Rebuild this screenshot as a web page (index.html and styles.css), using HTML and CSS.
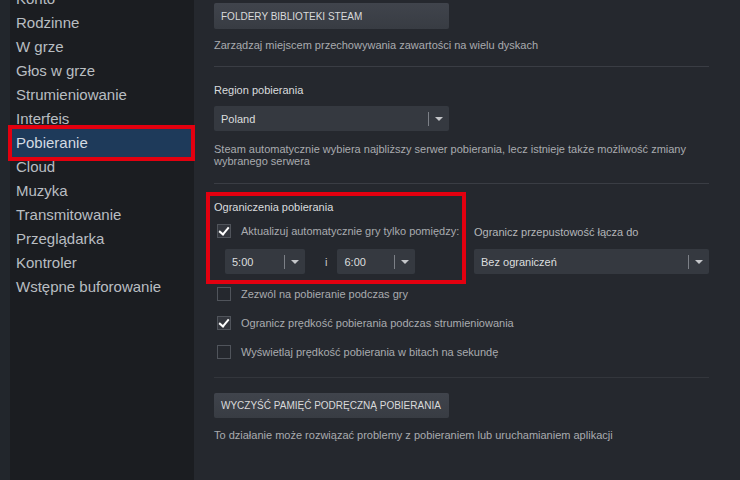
FILE: index.html
```html
<!DOCTYPE html>
<html lang="pl">
<head>
  <meta charset="UTF-8">
  <title>Ustawienia - Pobieranie</title>
  <link rel="stylesheet" href="styles.css">
</head>
<body>
  <div class="window">
    <!-- Sidebar -->
    <ul class="nav">
      <li>Konto</li>
      <li>Rodzinne</li>
      <li>W grze</li>
      <li>Głos w grze</li>
      <li>Strumieniowanie</li>
      <li>Interfeis</li>
      <li class="active">Pobieranie</li>
      <li>Cloud</li>
      <li>Muzyka</li>
      <li>Transmitowanie</li>
      <li>Przeglądarka</li>
      <li>Kontroler</li>
      <li>Wstępne buforowanie</li>
    </ul>

    <!-- Download settings -->
    <div class="content">
      <button class="btn">FOLDERY BIBLIOTEKI STEAM</button>
      <p class="desc first">Zarządzaj miejscem przechowywania zawartości na wielu dyskach</p>
      <div class="divider"></div>

      <div class="heading">Region pobierania</div>
      <div class="select region">
        <span>Poland</span>
        <span class="arrow"></span>
      </div>
      <p class="desc two-line">Steam automatycznie wybiera najbliższy serwer pobierania, lecz istnieje także możliwość zmiany wybranego serwera</p>
      <div class="divider"></div>

      <div class="limits">
        <div class="limits-box">
          <div class="heading">Ograniczenia pobierania</div>
          <label class="check-row">
            <span class="box checked"></span>
            Aktualizuj automatycznie gry tylko pomiędzy:
          </label>
          <div class="time-row">
            <div class="select time">
              <span>5:00</span>
              <span class="arrow"></span>
            </div>
            <span class="and">i</span>
            <div class="select time">
              <span>6:00</span>
              <span class="arrow"></span>
            </div>
          </div>
        </div>
        <div class="bandwidth">
          <div class="label">Ogranicz przepustowość łącza do</div>
          <div class="select wide">
            <span>Bez ograniczeń</span>
            <span class="arrow"></span>
          </div>
        </div>
      </div>

      <label class="check-row option">
        <span class="box"></span>
        Zezwól na pobieranie podczas gry
      </label>
      <label class="check-row option">
        <span class="box checked"></span>
        Ogranicz prędkość pobierania podczas strumieniowania
      </label>
      <label class="check-row option">
        <span class="box"></span>
        Wyświetlaj prędkość pobierania w bitach na sekundę
      </label>
      <div class="divider faint"></div>

      <button class="btn clear">WYCZYŚĆ PAMIĘĆ PODRĘCZNĄ POBIERANIA</button>
      <p class="desc">To działanie może rozwiązać problemy z pobieraniem lub uruchamianiem aplikacji</p>
    </div>
  </div>
</body>
</html>
```

FILE: styles.css
```css
/* General styling */
body {
  margin: 0;
  background-color: #25282e;
  font-family: "Liberation Sans", Arial, sans-serif;
  overflow: hidden;
}
.window {
  display: flex;
  height: 480px;
}

/* Sidebar */
.nav {
  list-style: none;
  margin: 0;
  padding: 0;
  width: 184px;
  border-left: 10px solid #22262c;
  background-color: #1b1d21;
}
.nav li {
  height: 24px;
  line-height: 24px;
  padding-left: 6px;
  font-size: 15px;
  color: #b9bdc1;
}
.nav li:first-child {
  margin-top: -13px;
}
.nav li.active {
  margin: 0 5px 0 4px;
  padding-left: 2px;
  background-color: #1e3a5a;
  box-shadow: 0 0 0 2px #1e3a5a;
  outline: 4px solid #e3000f;
  outline-offset: 2px;
  color: #d4dbe2;
}

/* Content */
.content {
  width: 495px;
  padding: 3px 0 0 20px;
  font-size: 11px;
  color: #a9abae;
}
.btn {
  display: block;
  width: 235px;
  height: 26px;
  padding: 0 7px;
  border: none;
  border-radius: 2px;
  background: linear-gradient(#40444c, #383c43);
  color: #d9dadb;
  font-family: inherit;
  font-size: 10px;
  text-align: left;
}
.btn.clear {
  height: 25px;
  margin-top: 15px;
}
.desc {
  margin: 10px 0 0;
  line-height: 14px;
}
.desc.first {
  margin-top: 9px;
}
.desc.two-line {
  margin-top: 12px;
  line-height: 12px;
}
.divider {
  height: 1px;
  margin-top: 14px;
  background-color: #3a3d44;
}
.desc.two-line + .divider {
  margin-top: 16px;
}
.divider.faint {
  margin-top: 18px;
  background-color: #33363c;
}
.heading {
  margin-top: 16px;
  line-height: 14px;
  color: #dadcde;
}

/* Dropdowns */
.select {
  display: flex;
  align-items: center;
  justify-content: space-between;
  box-sizing: border-box;
  height: 25px;
  padding-left: 7px;
  border-radius: 2px;
  background-color: #353940;
  color: #dcdedf;
}
.select.region {
  width: 235px;
  margin-top: 9px;
}
.select.time {
  width: 80px;
}
.select.wide {
  width: 235px;
  margin-top: 10px;
}
.arrow {
  position: relative;
  width: 20px;
  height: 14px;
  border-left: 1px solid #7c8087;
}
.arrow::after {
  content: "";
  position: absolute;
  left: 6px;
  top: 5px;
  border-left: 4px solid transparent;
  border-right: 4px solid transparent;
  border-top: 4px solid #c4c6c9;
}

/* Download limits */
.limits {
  display: flex;
  align-items: flex-end;
  gap: 12px;
  margin-top: 12px;
}
.limits-box {
  width: 248px;
  margin-left: -4px;
  padding: 4px 0 6px 4px;
  outline: 4px solid #e3000f;
}
.limits-box .heading {
  margin-top: 0;
}
.check-row {
  display: flex;
  align-items: center;
  gap: 10px;
  height: 14px;
  margin-top: 10px;
  padding-left: 3px;
}
.check-row.option {
  margin-top: 15px;
}
.check-row.option:first-of-type {
  margin-top: 7px;
}
.box {
  box-sizing: border-box;
  width: 14px;
  height: 14px;
  border: 1px solid #50545b;
  background-color: #25282e;
}
.box.checked {
  position: relative;
  background-color: #33363d;
}
.box.checked::after {
  content: "";
  position: absolute;
  left: 3px;
  top: 0;
  width: 4px;
  height: 8px;
  border-right: 2px solid #fff;
  border-bottom: 2px solid #fff;
  transform: rotate(40deg);
}
.time-row {
  display: flex;
  align-items: center;
  margin-top: 11px;
  padding-left: 11px;
}
.time-row .and {
  margin: 0 10px 0 20px;
  color: #c8cacc;
}
.time-row .select:last-child {
  width: 78px;
}
.bandwidth {
  margin-bottom: 6px;
}
.bandwidth .label {
  line-height: 14px;
  color: #b4b6b9;
}
```
